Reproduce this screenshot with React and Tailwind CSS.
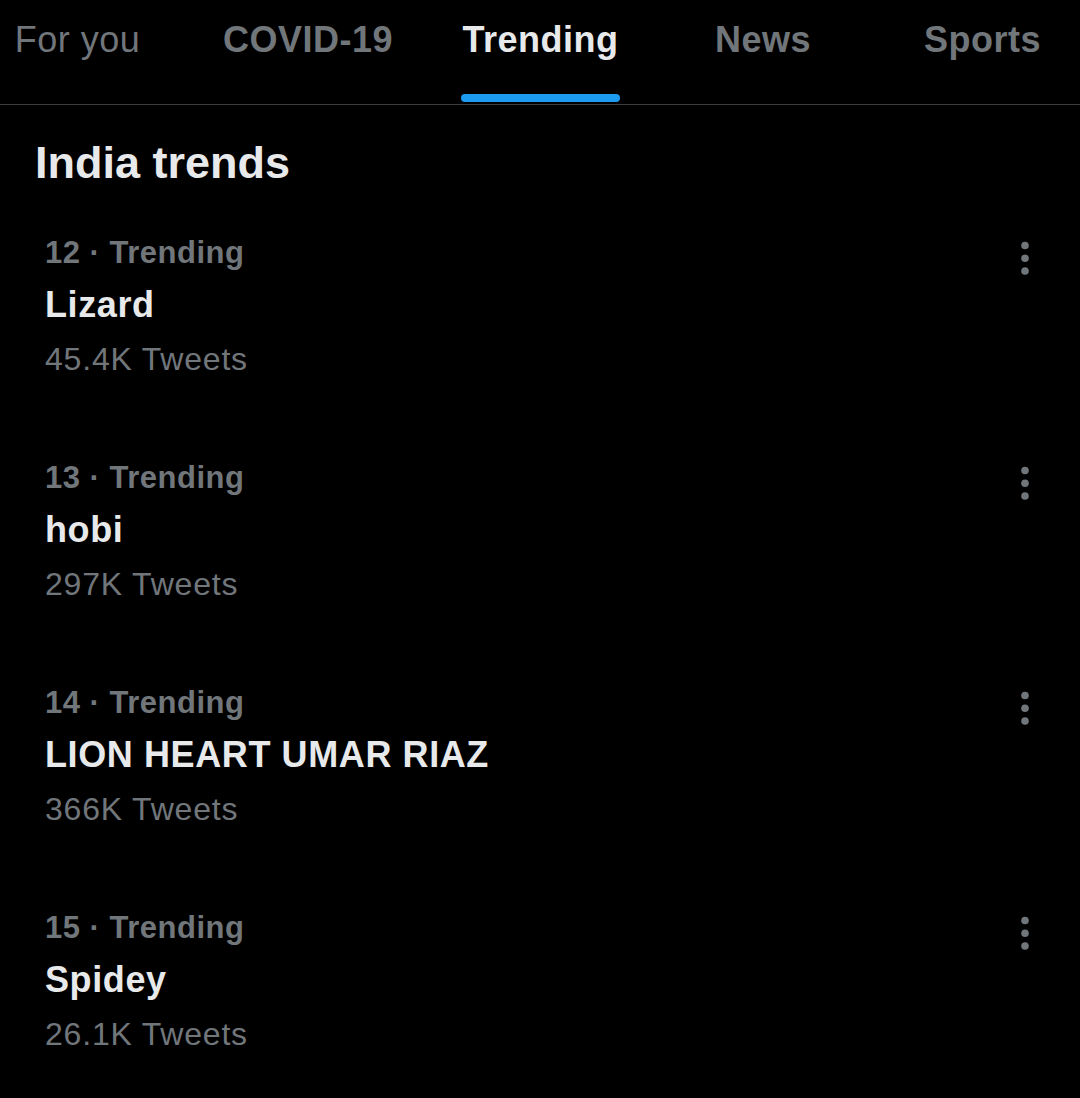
import React from 'react';

const tabs = [
  { label: 'For you', w: 'w-[155px]', bold: false },
  { label: 'COVID-19', w: 'w-[306px]', bold: true },
  { label: 'Trending', w: 'w-[159px]', bold: true, active: true },
  { label: 'News', w: 'w-[286px]', bold: true },
  { label: 'Sports', w: 'w-[153px]', bold: true },
];

const trends = [
  { rank: 12, name: 'Lizard', count: '45.4K Tweets' },
  { rank: 13, name: 'hobi', count: '297K Tweets' },
  { rank: 14, name: 'LION HEART UMAR RIAZ', count: '366K Tweets' },
  { rank: 15, name: 'Spidey', count: '26.1K Tweets' },
];

const MoreIcon = () => (
  <svg width="10" height="40" viewBox="0 0 10 40" className="shrink-0">
    <circle cx="5" cy="7.5" r="3.8" fill="#71767b" />
    <circle cx="5" cy="20.3" r="3.8" fill="#71767b" />
    <circle cx="5" cy="33" r="3.8" fill="#71767b" />
  </svg>
);

export default function App() {
  return (
    <div className="min-h-[1098px] w-[1080px] bg-black font-['Liberation_Sans',Arial,sans-serif]">
      <div className="flex h-[105px] border-b border-[#3a3d40]">
        {tabs.map((t) => (
          <div key={t.label} className={`${t.w} relative flex shrink-0 flex-col items-center`}>
            <span
              className={`pt-[22px] text-[36px] leading-[36px] tracking-[0.5px] whitespace-nowrap ${
                t.bold ? 'font-bold' : 'font-normal'
              } ${t.active ? 'text-[#e7e9ea]' : 'text-[#71767b]'}`}
            >
              {t.label}
            </span>
            {t.active && (
              <div className="absolute bottom-[2px] left-0 right-0 h-[8px] rounded-full bg-[#1d9bf0]" />
            )}
          </div>
        ))}
      </div>

      <h2 className="ml-[35px] mt-[35px] text-[45px] leading-[45px] font-bold text-[#e7e9ea]">
        India trends
      </h2>

      <div className="mt-[53px] flex flex-col gap-[88px] pl-[45px] pr-[50px]">
        {trends.map((t) => (
          <div key={t.rank} className="flex items-start justify-between">
            <div className="flex flex-col">
              <span className="text-[31px] leading-[30px] font-bold text-[#71767b] tracking-[0.5px]">
                {t.rank} · Trending
              </span>
              <span className="mt-[19px] text-[36px] leading-[36px] font-bold text-[#e7e9ea] tracking-[0.6px]">
                {t.name}
              </span>
              <span className="mt-[20px] text-[32px] leading-[32px] text-[#71767b] tracking-[0.8px]">
                {t.count}
              </span>
            </div>
            <MoreIcon />
          </div>
        ))}
      </div>
    </div>
  );
}
